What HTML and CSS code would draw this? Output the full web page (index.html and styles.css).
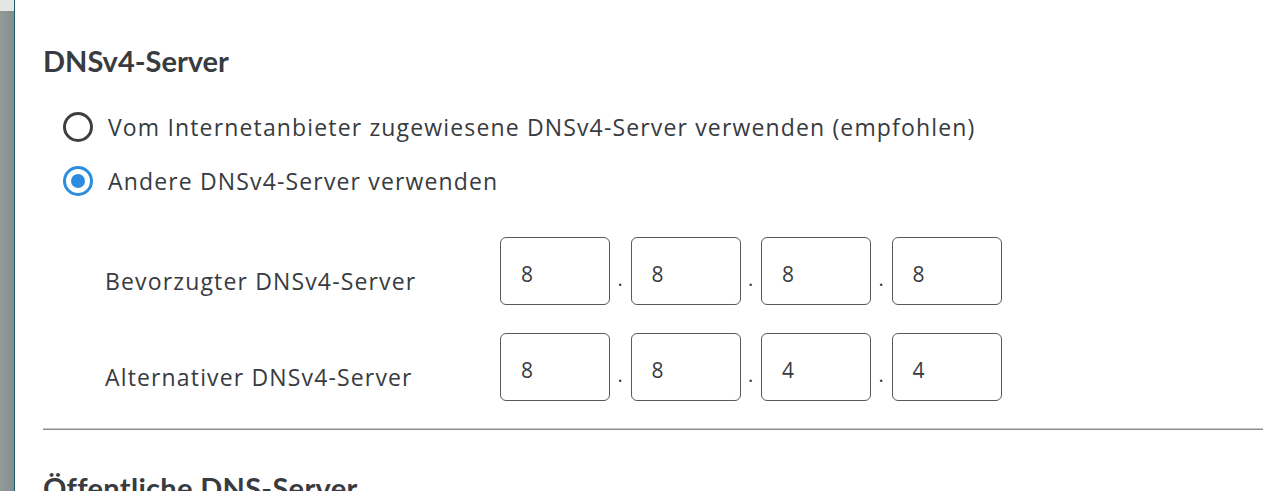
FILE: index.html
```html
<!DOCTYPE html>
<html lang="de">
<head>
<meta charset="utf-8">
<title>DNSv4-Server</title>
<link rel="stylesheet" href="styles.css">
</head>
<body>
<div class="sidebar"><div class="sidebar-top"></div></div>
<main class="content">
  <h2 class="section-title">DNSv4-Server</h2>
  <div class="radio-list">
    <label class="radio-row">
      <span class="radio"></span>
      <span class="radio-text">Vom Internetanbieter zugewiesene DNSv4-Server verwenden (empfohlen)</span>
    </label>
    <label class="radio-row">
      <span class="radio radio-checked"></span>
      <span class="radio-text">Andere DNSv4-Server verwenden</span>
    </label>
  </div>
  <div class="ip-rows">
    <div class="ip-row">
      <span class="ip-label">Bevorzugter DNSv4-Server</span>
      <div class="ip-fields">
        <span class="ip-box">8</span><span class="ip-dot">.</span>
        <span class="ip-box">8</span><span class="ip-dot">.</span>
        <span class="ip-box">8</span><span class="ip-dot">.</span>
        <span class="ip-box">8</span>
      </div>
    </div>
    <div class="ip-row">
      <span class="ip-label">Alternativer DNSv4-Server</span>
      <div class="ip-fields">
        <span class="ip-box">8</span><span class="ip-dot">.</span>
        <span class="ip-box">8</span><span class="ip-dot">.</span>
        <span class="ip-box">4</span><span class="ip-dot">.</span>
        <span class="ip-box">4</span>
      </div>
    </div>
  </div>
  <div class="divider"></div>
  <h2 class="section-title next-title">Öffentliche DNS-Server</h2>
</main>
</body>
</html>
```
FILE: styles.css
```css
html, body {
  margin: 0;
  padding: 0;
  height: 100%;
  overflow: hidden;
  background: #ffffff;
}
body {
  display: flex;
  font-family: "Open Sans", "Liberation Sans", sans-serif;
  color: #383b3f;
}
.sidebar {
  width: 14px;
  flex: none;
  background: linear-gradient(90deg, #939b99 0%, #858e8c 100%);
  border-right: 1px solid #1d5c6b;
}
.sidebar-top {
  height: 11px;
  background: #e4e6e6;
}
.content {
  flex: 1;
  padding-left: 28px;
  padding-top: 44px;
}
.section-title {
  margin: 0;
  font-family: "Lato", "Open Sans", sans-serif;
  font-size: 29px;
  font-weight: 700;
  line-height: 34px;
  color: #383b3f;
}
.next-title {
  margin-top: 41px;
  letter-spacing: 0.3px;
}
.radio-list {
  margin-top: 34px;
  margin-left: 20px;
  display: flex;
  flex-direction: column;
  gap: 25px;
}
.radio-row {
  display: flex;
  align-items: center;
  gap: 15px;
  height: 29px;
}
.radio {
  width: 24px;
  height: 24px;
  border: 3px solid #3c4043;
  border-radius: 50%;
  box-sizing: content-box;
  flex: none;
  position: relative;
}
.radio-checked {
  border-color: #2b8ce0;
}
.radio-checked::after {
  content: "";
  position: absolute;
  left: 5px;
  top: 5px;
  width: 14px;
  height: 14px;
  border-radius: 50%;
  background: #2b8ce0;
}
.radio-text {
  font-size: 23px;
  letter-spacing: 1.15px;
}
.ip-rows {
  margin-top: 42px;
  display: flex;
  flex-direction: column;
  gap: 28px;
}
.ip-row {
  display: flex;
  align-items: center;
}
.ip-label {
  width: 457px;
  padding-left: 62px;
  box-sizing: border-box;
  font-size: 23px;
  letter-spacing: 1.15px;
  padding-top: 20px;
}
.ip-fields {
  display: flex;
  align-items: center;
}
.ip-box {
  border: 1px solid #555a5e;
  border-radius: 6px;
  box-sizing: content-box;
  display: flex;
  align-items: center;
  padding-left: 20px;
  padding-top: 5px;
  height: 61px;
  width: 88px;
  font-size: 21px;
  color: #383b3f;
}
.ip-dot {
  width: 20.5px;
  text-align: center;
  font-size: 20px;
  padding-top: 14px;
}
.divider {
  margin-top: 27px;
  height: 1px;
  border-top: 1px solid #c8c8c8;
  background: #8c8c8c;
}
```
